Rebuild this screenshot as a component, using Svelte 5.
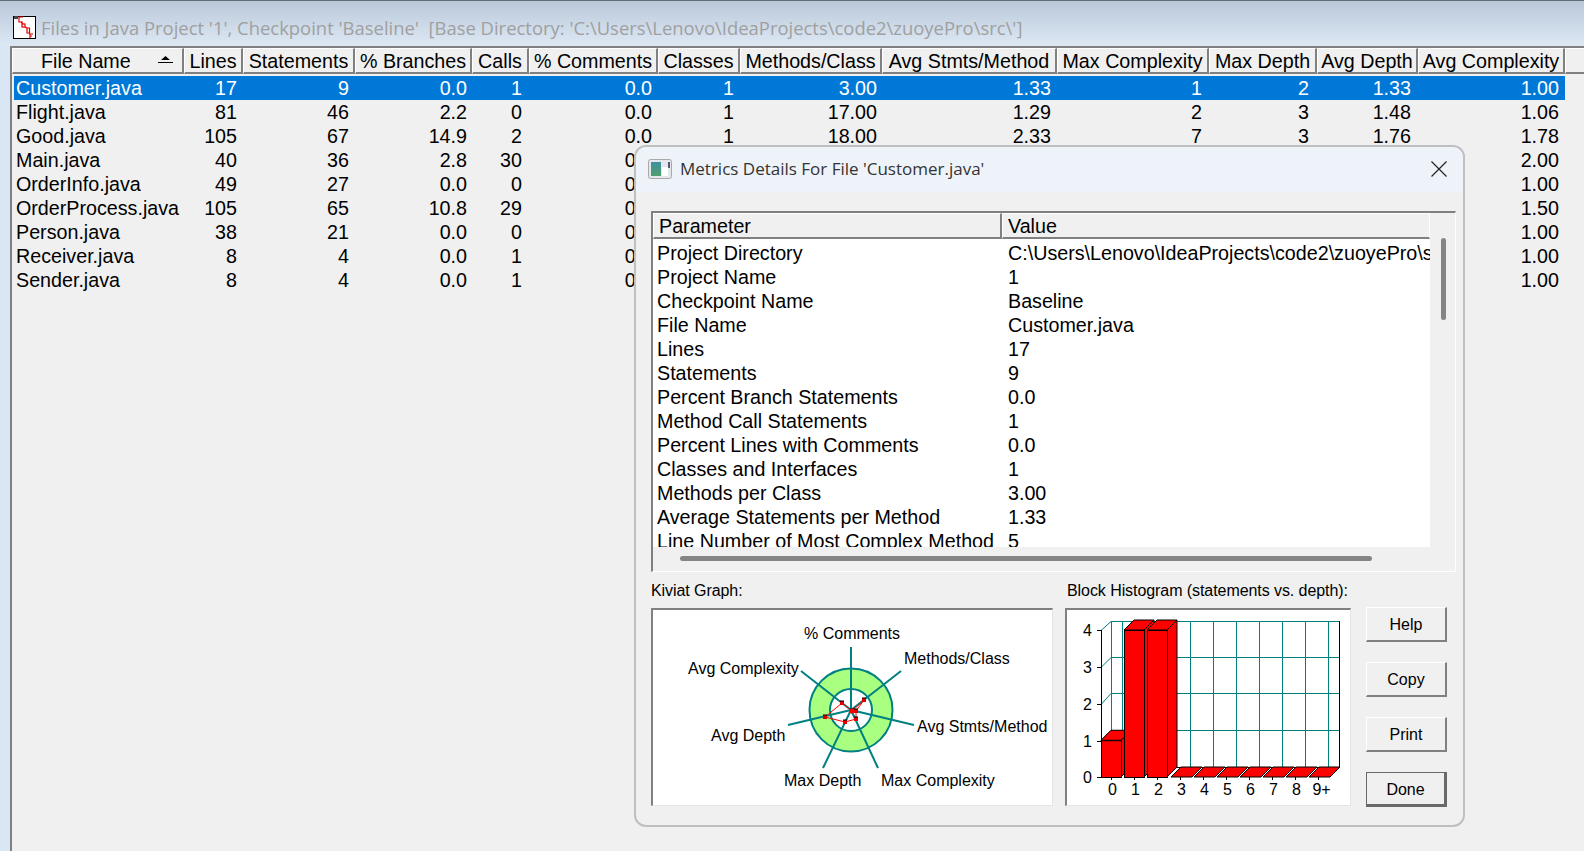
<script>
  const cols = [
    { name: 'File Name' }, { name: 'Lines' }, { name: 'Statements' }, { name: '% Branches' },
    { name: 'Calls' }, { name: '% Comments' }, { name: 'Classes' }, { name: 'Methods/Class' },
    { name: 'Avg Stmts/Method' }, { name: 'Max Complexity' }, { name: 'Max Depth' }, { name: 'Avg Depth' }, { name: 'Avg Complexity' }
  ];
  const rows = [
    ['Customer.java','17','9','0.0','1','0.0','1','3.00','1.33','1','2','1.33','1.00'],
    ['Flight.java','81','46','2.2','0','0.0','1','17.00','1.29','2','3','1.48','1.06'],
    ['Good.java','105','67','14.9','2','0.0','1','18.00','2.33','7','3','1.76','1.78'],
    ['Main.java','40','36','2.8','30','0.0','1','1.00','1.00','1','2','1.00','2.00'],
    ['OrderInfo.java','49','27','0.0','0','0.0','1','1.00','1.00','1','2','1.00','1.00'],
    ['OrderProcess.java','105','65','10.8','29','0.0','1','1.00','1.00','1','2','1.00','1.50'],
    ['Person.java','38','21','0.0','0','0.0','1','1.00','1.00','1','2','1.00','1.00'],
    ['Receiver.java','8','4','0.0','1','0.0','1','1.00','1.00','1','2','1.00','1.00'],
    ['Sender.java','8','4','0.0','1','0.0','1','1.00','1.00','1','2','1.00','1.00']
  ];
  const params = [
    ['Project Directory','C:\\Users\\Lenovo\\IdeaProjects\\code2\\zuoyePro\\src\\'],
    ['Project Name','1'],['Checkpoint Name','Baseline'],['File Name','Customer.java'],['Lines','17'],
    ['Statements','9'],['Percent Branch Statements','0.0'],['Method Call Statements','1'],
    ['Percent Lines with Comments','0.0'],['Classes and Interfaces','1'],['Methods per Class','3.00'],
    ['Average Statements per Method','1.33'],['Line Number of Most Complex Method','5']
  ];
  const title = "Files in Java Project '1', Checkpoint 'Baseline'  [Base Directory: 'C:\\Users\\Lenovo\\IdeaProjects\\code2\\zuoyePro\\src\\']";

  // Kiviat, in the coordinates of its box
  const cx = 198, cy = 100;
  const spokes = [[198,37],[248,61],[261,115],[225,158],[170,158],[135,115],[148,61]];
  const poly = [[199,101],[211,90],[203,101],[203,109],[192,112],[172,107],[189,93]];
  const polyPts = poly.map(p => p.join(',')).join(' ');
  const kLabels = [
    ['% Comments',151,29],['Methods/Class',251,54],['Avg Complexity',35,64],['Avg Stmts/Method',264,122],
    ['Avg Depth',58,131],['Max Depth',131,176],['Max Complexity',228,176]
  ];

  // Histogram, in the coordinates of its box
  const hX0 = 34, hY0 = 167, dp = 10, step = 23;
  const hVals = [1,4,4,0,0,0,0,0,0,0];
  const hLabels = ['0','1','2','3','4','5','6','7','8','9+'];
  const gridY = [11,47,83,120];
  const gridYF = [20,57,94,130];
  const gridX = [55,78,100,123,146,169,192,215,238,261];
  const yLab = [[4,20],[3,57],[2,94],[1,131],[0,167]];
  const buttons = ['Help','Copy','Print','Done'];
</script>

<div class="window">
  <header class="titlebar">
    <svg class="appicon" width="23" height="23" viewBox="0 0 23 23">
      <rect x="0.5" y="0.5" width="22" height="22" fill="#fff" stroke="#000"/>
      <rect x="1" y="0" width="4" height="3" fill="#444"/>
      <g fill="none" stroke="#e00000" stroke-width="1.2">
        <path d="M10 1H6V6H10"/><rect x="9" y="8" width="3" height="3"/><path d="M14 12H16.5V17H14Z"/><path d="M17 22V18H20M17 20H19"/><path d="M8 6L10 8M12 11L14 12M16 17L17 18"/>
      </g>
    </svg>
    <span class="wintitle">{title}</span>
  </header>

  <main class="client">
    <div class="grid head">
      {#each cols as c, i}
        <div class="hcell" class:first={i === 0}>
          {c.name}
          {#if i === 0}
            <svg class="sort" width="15" height="7" viewBox="0 0 15 7"><path d="M0 6H15V7H0ZM3 4L7.5 0L12 4Z" fill="#000"/></svg>
          {/if}
        </div>
      {/each}
      <div class="hcell blank"></div>
    </div>
    <div class="rows">
      {#each rows as r, ri}
        <div class="grid row" class:sel={ri === 0}>
          {#each r as v, i}
            <div class="cell" class:name={i === 0}>{v}</div>
          {/each}
        </div>
      {/each}
    </div>
  </main>

  <section class="dialog">
    <div class="dtitle">
      <svg width="24" height="20" viewBox="0 0 24 20">
        <defs><linearGradient id="ig" x1="0" y1="0" x2="0" y2="1"><stop offset="0" stop-color="#3f8f9f"/><stop offset="1" stop-color="#4f9f6f"/></linearGradient></defs>
        <rect x="0.5" y="0.5" width="23" height="19" rx="2" fill="#e4e8ec" stroke="#a8a8a8"/>
        <rect x="3" y="3" width="10" height="14" fill="url(#ig)"/>
        <rect x="14" y="8" width="6" height="9" fill="#fff"/>
        <rect x="20" y="3" width="2" height="6" fill="#557"/>
      </svg>
      <span class="dtext">Metrics Details For File 'Customer.java'</span>
      <svg class="close" width="16" height="16" viewBox="0 0 16 16"><path d="M0.5 0.5L15.5 15.5M15.5 0.5L0.5 15.5" stroke="#222" stroke-width="1.2" fill="none"/></svg>
    </div>

    <div class="dbody">
      <div class="frame">
        <div class="fmain">
          <div class="phead">
            <div class="ph c1">Parameter</div>
            <div class="ph c2">Value</div>
          </div>
          <div class="pbody">
            {#each params as p}
              <div class="prow"><div class="pk">{p[0]}</div><div class="pv">{p[1]}</div></div>
            {/each}
          </div>
          <div class="hscroll"><div class="hthumb"></div></div>
        </div>
        <div class="vscroll"><div class="vthumb"></div></div>
      </div>

      <div class="lower">
        <div class="kcol">
          <div class="lbl">Kiviat Graph:</div>
          <div class="chart kiviat">
            <svg width="399" height="196" viewBox="0 0 399 196">
              <circle cx={cx} cy={cy} r="41.5" fill="#a9ff80" stroke="#008080" stroke-width="2"/>
              <circle cx={cx} cy={cy} r="21" fill="#fff" stroke="#008080" stroke-width="2"/>
              {#each spokes as s}
                <line x1={cx} y1={cy} x2={s[0]} y2={s[1]} stroke="#008080" stroke-width="2"/>
              {/each}
              <polygon points={polyPts} fill="none" stroke="#ff0000" stroke-width="1"/>
              {#each poly as p}
                <rect x={p[0]-2} y={p[1]-2} width="4" height="4" fill="#e00000"/>
                <path d="M{p[0]-2} {p[1]-2}h4" stroke="#000" stroke-width="1"/>
              {/each}
              <circle cx="199" cy="101" r="2.5" fill="#ff0000"/>
              {#each kLabels as l}
                <text x={l[1]} y={l[2]} class="ctext">{l[0]}</text>
              {/each}
            </svg>
          </div>
        </div>
        <div class="hcol">
          <div class="lbl hlbl">Block Histogram (statements vs. depth):</div>
          <div class="chart hist">
            <svg width="284" height="196" viewBox="0 0 284 196">
              <g stroke="#008080" stroke-width="1" fill="none">
                {#each gridY as y, i}
                  <line x1="44" y1={y+.5} x2="272" y2={y+.5}/>
                  <line x1="34" y1={gridYF[i]+.5} x2="44" y2={y+.5}/>
                {/each}
                <line x1="44.5" y1="11" x2="44.5" y2="157"/>
                {#each gridX as x}
                  <line x1={x+.5} y1="11" x2={x+.5} y2="157"/>
                {/each}
              </g>
              <line x1="272.5" y1="11" x2="272.5" y2="157" stroke="#000"/>
              <line x1="34.5" y1="20" x2="34.5" y2="167" stroke="#000"/>
              <line x1="44" y1="157.5" x2="273" y2="157.5" stroke="#000"/>
              {#each yLab as l}
                <line x1="30" y1={l[1]+.5} x2="34" y2={l[1]+.5} stroke="#000"/>
                <text x="25" y={l[1]+5.5} class="ctext" text-anchor="end">{l[0]}</text>
              {/each}
              {#each hVals as v, i}
                {@const x = hX0 + i * step}
                {@const w = 20}
                {@const top = hY0 - v * 36.75}
                {#if v > 0}
                  <path d="M{x+w} {top}L{x+w+dp} {top-dp}V{hY0-dp}L{x+w} {hY0}Z" fill="#ff0000" stroke="#000"/>
                  <path d="M{x} {top}L{x+dp} {top-dp}H{x+w+dp}L{x+w} {top}Z" fill="#ff0000" stroke="#000"/>
                  <rect x={x+.5} y={top+.5} width={w} height={hY0-top} fill="#ff0000" stroke="#000"/>
                {:else}
                  <path d="M{x+1} {hY0}L{x+dp+1} {hY0-dp}H{x+step+dp-1}L{x+step-1} {hY0}Z" fill="#ff0000" stroke="#000"/>
                {/if}
                <line x1={x+10.5} y1={hY0} x2={x+10.5} y2={hY0+3} stroke="#000"/>
                <text x={x+11.5+(i === 9 ? 2 : 0)} y="185" class="ctext" text-anchor="middle">{hLabels[i]}</text>
              {/each}
            </svg>
          </div>
        </div>
        <div class="btns">
          {#each buttons as b}
            <button class="btn" class:def={b === 'Done'}>{b}</button>
          {/each}
        </div>
      </div>
    </div>
  </section>
</div>

<style>
  :global(body) { margin: 0; background: #f0f0f0; }
  .window {
    position: relative; width: 1584px; height: 851px; overflow: hidden;
    display: flex; flex-direction: column;
    background: #d9e6f4;
    font-family: "Liberation Sans", Arial, sans-serif;
    color: #000;
  }
  .titlebar {
    flex: none; height: 46px; box-sizing: border-box; padding: 15px 0 0 13px;
    display: flex; align-items: flex-start; gap: 5px;
    border-top: 1px solid #646c78;
    background: linear-gradient(#b9c8d9, #dde8f4);
  }
  .appicon { flex: none; }
  .wintitle {
    white-space: pre; font-family: "Open Sans", "Noto Sans", sans-serif; font-size: 18.45px;
    color: #a0a0a0; line-height: 23px;
  }
  .client {
    flex: 1; margin-left: 10px; border-left: 2px solid #808080;
    border-top: 2px solid #808080; background: #f0f0f0; min-height: 0;
  }
  .head {
    display: grid; height: 26px;
    grid-template-columns: 172px 59px 112px 117px 57px 129px 82px 142px 175px 152px 108px 101px 147px 1fr;
  }
  .row {
    display: grid; height: 24px; line-height: 24px; font-size: 19.7px; margin-left: 2px;
    grid-template-columns: 170px 59px 112px 118px 55px 130px 82px 143px 174px 151px 107px 102px 148px;
  }
  .hcell {
    box-sizing: border-box; height: 26px; line-height: 25px; text-align: center;
    font-size: 19.7px; white-space: nowrap;
    background: #f0f0f0;
    border-top: 1px solid #fff; border-left: 1px solid #fff;
    border-right: 2px solid #808080; border-bottom: 2px solid #808080;
    overflow: hidden;
  }
  .hcell.first { text-align: left; padding: 1px 0 0 28px; display: flex; align-items: center; gap: 27px; }
  .hcell.blank { border-right: 0; }
  .sort { flex: none; margin-top: -3px; }
  .rows { padding-top: 2px; }
  .row .cell { text-align: right; padding-right: 6px; white-space: nowrap; }
  .row .cell.name { text-align: left; padding: 0 0 0 2px; }
  .row.sel { background: #0078d7; color: #fff; width: 1551px; }

  .dialog {
    position: absolute; left: 634px; top: 145px; width: 831px; height: 682px;
    box-sizing: border-box; border: 2px solid #bfbfbf; border-radius: 12px;
    background: #f0f0f0; overflow: hidden;
  }
  .dtitle {
    height: 45px; background: #eef3f9; display: flex; align-items: center;
    padding: 0 16px 2px 12px; box-sizing: border-box;
  }
  .dtext {
    margin-left: 8px; flex: 1; font-family: "Open Sans", "Noto Sans", sans-serif;
    font-size: 17px; color: #333;
  }
  .close { flex: none; }
  .dbody { padding: 19px 7px 0 15px; }
  .frame {
    height: 361px; box-sizing: border-box; display: flex;
    border-top: 2px solid #808080; border-left: 2px solid #808080;
    border-right: 1px solid #fff; border-bottom: 1px solid #fff;
  }
  .fmain { width: 777px; display: flex; flex-direction: column; min-width: 0; }
  .phead { display: flex; height: 26px; flex: none; }
  .ph {
    box-sizing: border-box; height: 26px; font-size: 19.7px; line-height: 25px; padding-left: 5px;
    border-top: 1px solid #fff; border-bottom: 2px solid #808080;
  }
  .ph.c1 { width: 349px; border-right: 2px solid #808080; border-left: 1px solid #fff; }
  .ph.c2 { flex: 1; padding-left: 5px; border-left: 1px solid #fff; border-right: 1px solid #fff; }
  .pbody { flex: none; height: 308px; background: #fff; overflow: hidden; padding-top: 2px; box-sizing: border-box; }
  .prow { display: flex; height: 24px; line-height: 24px; font-size: 19.7px; white-space: nowrap; }
  .pk { width: 349px; flex: none; padding-left: 4px; box-sizing: border-box; }
  .pv { padding-left: 6px; }
  .hscroll { flex: 1; padding: 9px 0 0 27px; }
  .hthumb { width: 692px; height: 5px; border-radius: 3px; background: #858585; }
  .vscroll { flex: 1; padding: 25px 0 0 11px; }
  .vthumb { width: 5px; height: 82px; border-radius: 3px; background: #858585; }
  .lower { display: flex; margin-top: 7px; }
  .lbl { height: 29px; line-height: 24px; font-size: 16px; white-space: nowrap; letter-spacing: -0.07px; }
  .hlbl { padding-left: 2px; }
  .kcol { width: 414px; flex: none; }
  .hcol { width: 301px; flex: none; }
  .chart {
    box-sizing: border-box; height: 198px; background: #fff;
    border-top: 2px solid #808080; border-left: 2px solid #808080;
    border-right: 1px solid #e4e4e4; border-bottom: 1px solid #e4e4e4;
  }
  .chart svg { display: block; }
  .kiviat { width: 402px; }
  .hist { width: 286px; }
  .ctext { font-size: 16px; fill: #000; font-family: "Liberation Sans", Arial, sans-serif; }
  .btns { padding-top: 28px; display: flex; flex-direction: column; gap: 20px; }
  .btn {
    width: 81px; height: 35px; padding: 2px 0 0; font-family: "Liberation Sans", Arial, sans-serif; font-size: 16px;
    color: #000; background: #f0f0f0; box-sizing: border-box;
    border-style: solid; border-width: 1px 2px 2px 1px;
    border-color: #fff #808080 #808080 #fff;
  }
  .btn.def { border: 2px solid #696969; border-width: 1px 3px 3px 1px; outline: 0; }
</style>
